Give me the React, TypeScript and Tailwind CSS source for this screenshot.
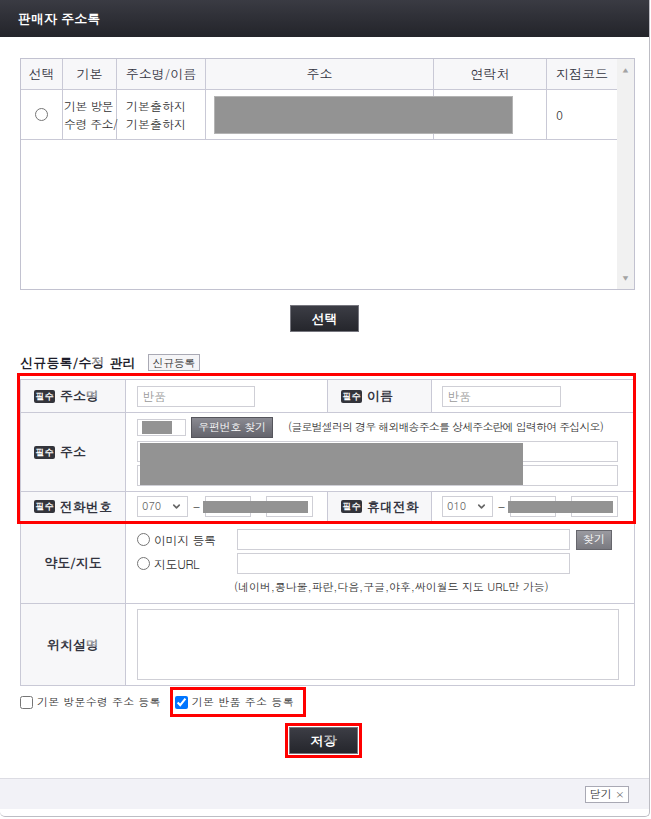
import React from 'react';
import { ChevronDown } from 'lucide-react';

const font = "font-['Dotum','Noto_Sans_CJK_KR',sans-serif]";

function Badge() {
  return (
    <span className="inline-flex items-center justify-center w-[21px] h-[13px] rounded-[2px] bg-[#33343b] text-white text-[9px] leading-none mr-[5px]">
      필수
    </span>
  );
}

function Cell({ className = '', children }: { className?: string; children?: React.ReactNode }) {
  return <div className={`border-r border-b border-[#c9c9d6] ${className}`}>{children}</div>;
}

function Label({ children, badge, center }: { children: React.ReactNode; badge?: boolean; center?: boolean }) {
  return (
    <Cell className={`bg-[#f7f7f9] flex items-center ${center ? 'justify-center' : 'pl-[13px]'} text-[13px] font-bold text-[#33343f]`}>
      {badge && <Badge />}
      {children}
    </Cell>
  );
}

function TextBox({ className = '', children }: { className?: string; children?: React.ReactNode }) {
  return (
    <div className={`border border-[#cfcfd6] bg-white flex items-center px-[4px] text-[12px] text-[#9a9a9a] ${className}`}>
      {children}
    </div>
  );
}

function PhoneSelect({ value }: { value: string }) {
  return (
    <div className="w-[51px] h-[21px] border border-[#cfcfd6] bg-white flex items-center justify-between pl-[4px] pr-[5px] text-[11px] text-[#666]">
      <span>{value}</span>
      <ChevronDown className="w-[11px] h-[11px] text-[#666]" strokeWidth={3.5} />
    </div>
  );
}

function PhoneInputs({ left }: { left: string }) {
  return (
    <div className="relative flex items-center">
      <PhoneSelect value={left} />
      <span className="mx-[5px] text-[12px] text-[#444]">-</span>
      <TextBox className="w-[46px] h-[21px]" />
      <div className="w-[15px]" />
      <TextBox className="w-[47px] h-[21px]" />
      <div className="absolute left-[66px] top-[5px] w-[105px] h-[12px] bg-[#939393]" />
    </div>
  );
}

function DarkButton({ children }: { children: React.ReactNode }) {
  return (
    <button className="w-[69px] h-[27px] bg-linear-to-b from-[#3c3d45] to-[#25262c] border border-[#76767e] text-white text-[13px] font-bold">
      {children}
    </button>
  );
}

export default function App() {
  return (
    <div className={`w-[651px] h-[819px] bg-white ${font}`}>
      <div className="w-[650px] h-[817px] bg-white border-r border-b border-[#bdbdc4] rounded-br-[5px] rounded-bl-[5px] flex flex-col overflow-hidden">
        {/* title bar */}
        <div className="h-[37px] shrink-0 bg-linear-to-b from-[#3a3b43] to-[#23242a] flex items-center pl-[18px]">
          <span className="text-white text-[13px] font-bold">판매자 주소록</span>
        </div>

        {/* address list */}
        <div className="mt-[21px] ml-[20px] w-[615px] h-[232px] border border-[#c2c2d0] flex">
          <div className="flex-1 flex flex-col">
            <div className="flex h-[31px] bg-[#f7f7f9] border-b border-[#c9c9d6] text-[13px] text-[#33333f]">
              <div className="w-[42px] border-r border-[#c9c9d6] flex items-center justify-center">선택</div>
              <div className="w-[54px] border-r border-[#c9c9d6] flex items-center justify-center">기본</div>
              <div className="w-[89px] border-r border-[#c9c9d6] flex items-center justify-center">주소명/이름</div>
              <div className="w-[228px] border-r border-[#c9c9d6] flex items-center justify-center">주소</div>
              <div className="w-[113px] border-r border-[#c9c9d6] flex items-center justify-center">연락처</div>
              <div className="flex-1 flex items-center justify-center">지점코드</div>
            </div>
            <div className="flex h-[50px] border-b border-[#c9c9d6] text-[12px] text-[#333] leading-[18px]">
              <div className="w-[42px] border-r border-[#c9c9d6] flex items-center justify-center">
                <input type="radio" className="w-[13px] h-[13px] m-0" />
              </div>
              <div className="w-[54px] border-r border-[#c9c9d6] flex flex-col justify-center pl-[1px] whitespace-nowrap tracking-[-0.6px]">
                <span>기본 방문</span>
                <span>수령 주소/</span>
              </div>
              <div className="w-[89px] border-r border-[#c9c9d6] flex flex-col justify-center pl-[9px]">
                <span>기본출하지</span>
                <span>기본출하지</span>
              </div>
              <div className="w-[228px] border-r border-[#c9c9d6] relative">
                <div className="absolute left-[8px] top-[6px] w-[299px] h-[38px] bg-[#939393] border border-[#b4b4b4]" />
              </div>
              <div className="w-[113px] border-r border-[#c9c9d6]" />
              <div className="flex-1 flex items-center pl-[9px]">0</div>
            </div>
          </div>
          <div className="w-[17px] bg-[#f1f1f1] flex flex-col items-center justify-between pt-[6px] pb-[6px] text-[7px] text-[#a3a3a3]">
            <span>▲</span>
            <span>▼</span>
          </div>
        </div>

        <div className="mt-[15px] flex justify-center">
          <DarkButton>선택</DarkButton>
        </div>

        {/* register / edit */}
        <div className="mt-[22px] ml-[20px] flex items-center h-[17px]">
          <span className="text-[13px] font-bold text-[#1d1d2a] tracking-[0.2px]">신규등록/수정 관리</span>
          <button className="ml-[12px] h-[17px] w-[52px] bg-[#f5f5f7] border border-[#a9a9b4] text-[11px] text-[#333] tracking-[-0.4px]">신규등록</button>
        </div>

        <div className="mt-[8px] ml-[20px] w-[615px] border-t border-l border-[#c9c9d6]">
          <div className="relative">
            <div className="grid grid-cols-[105px_202px_104px_203px] grid-rows-[33px_79px_30px]">
              <Label badge>주소명</Label>
              <Cell className="flex items-center pl-[11px]">
                <TextBox className="w-[118px] h-[21px]">반품</TextBox>
              </Cell>
              <Label badge>이름</Label>
              <Cell className="flex items-center pl-[10px]">
                <TextBox className="w-[119px] h-[21px]">반품</TextBox>
              </Cell>

              <Label badge>주소</Label>
              <Cell className="col-span-3 pl-[11px] pt-[4px] relative">
                <div className="flex items-center h-[21px] whitespace-nowrap">
                  <div className="w-[49px] h-[17px] border border-[#cfcfd6] p-px pl-[4px]">
                    <div className="w-[30px] h-full bg-[#939393]" />
                  </div>
                  <button className="ml-[5px] w-[82px] h-[21px] bg-linear-to-b from-[#8a8a92] to-[#64646c] border border-[#55555c] text-white text-[11px] tracking-[-0.3px]">
                    우편번호 찾기
                  </button>
                  <span className="ml-[15px] text-[11px] text-[#333] tracking-[-0.85px]">(글로벌셀러의 경우 해외배송주소를 상세주소란에 입력하여 주십시오)</span>
                </div>
                <TextBox className="mt-[3px] w-[481px] h-[21px]" />
                <TextBox className="mt-[3px] w-[481px] h-[21px]" />
                <div className="absolute left-[14px] top-[30px] w-[383px] h-[42px] bg-[#939393]" />
              </Cell>

              <Label badge>전화번호</Label>
              <Cell className="flex items-center pl-[11px]">
                <PhoneInputs left="070" />
              </Cell>
              <Label badge>휴대전화</Label>
              <Cell className="flex items-center pl-[10px]">
                <PhoneInputs left="010" />
              </Cell>
            </div>
            <div className="absolute left-[-4px] top-[-7px] right-[-1px] bottom-[-2px] border-[3px] border-[#ff0000] pointer-events-none" />
          </div>

          <div className="grid grid-cols-[105px_509px] grid-rows-[82px_82px]">
            <Label center>약도/지도</Label>
            <Cell className="pl-[11px] pt-[7px] text-[12px] text-[#333]">
              <div className="flex items-center h-[21px]">
                <input type="radio" className="w-[13px] h-[13px] m-0" />
                <span className="ml-[4px] w-[83px] tracking-[-0.4px]">이미지 등록</span>
                <TextBox className="w-[333px] h-[21px]" />
                <button className="ml-[6px] w-[36px] h-[20px] bg-linear-to-b from-[#9a9aa0] to-[#7a7a80] border border-[#66666c] text-white text-[11px]">찾기</button>
              </div>
              <div className="flex items-center h-[21px] mt-[3px]">
                <input type="radio" className="w-[13px] h-[13px] m-0" />
                <span className="ml-[4px] w-[83px] tracking-[-0.4px]">지도URL</span>
                <TextBox className="w-[333px] h-[21px]" />
              </div>
              <div className="mt-[5px] ml-[97px] text-[11px] text-[#333] tracking-[-0.1px] whitespace-nowrap">(네이버,콩나물,파란,다음,구글,야후,싸이월드 지도 URL만 가능)</div>
            </Cell>
            <Label center>위치설명</Label>
            <Cell className="pl-[11px] pt-[5px]">
              <div className="w-[482px] h-[71px] border border-[#cfcfd6]" />
            </Cell>
          </div>
        </div>

        {/* default flags */}
        <div className="mt-[1px] ml-[20px] flex items-center h-[30px] text-[11px] text-[#333] whitespace-nowrap">
          <input type="checkbox" className="w-[13px] h-[13px] m-0" />
          <span className="ml-[4px] tracking-[0.2px]">기본 방문수령 주소 등록</span>
          <div className="ml-[9px] h-[30px] border-[3px] border-[#ff0000] flex items-center pl-[2px] pr-[9px]">
            <input type="checkbox" defaultChecked className="w-[13px] h-[13px] m-0" />
            <span className="ml-[4px] tracking-[0.3px]">기본 반품 주소 등록</span>
          </div>
        </div>

        <div className="mt-[6px] flex justify-center">
          <div className="border-[3px] border-[#ff0000] p-[1px] ml-[-2px]">
            <DarkButton>저장</DarkButton>
          </div>
        </div>

        {/* footer */}
        <div className="mt-[20px] h-[31px] border-t border-[#dcdce3] bg-[#f2f2f7] flex items-center justify-end pr-[20px]">
          <button className="h-[17px] px-[4px] bg-white border border-[#a9a9b4] text-[11px] text-[#333] flex items-center gap-[4px]">
            닫기 <span className="text-[10px] text-[#555]">×</span>
          </button>
        </div>
      </div>
    </div>
  );
}
